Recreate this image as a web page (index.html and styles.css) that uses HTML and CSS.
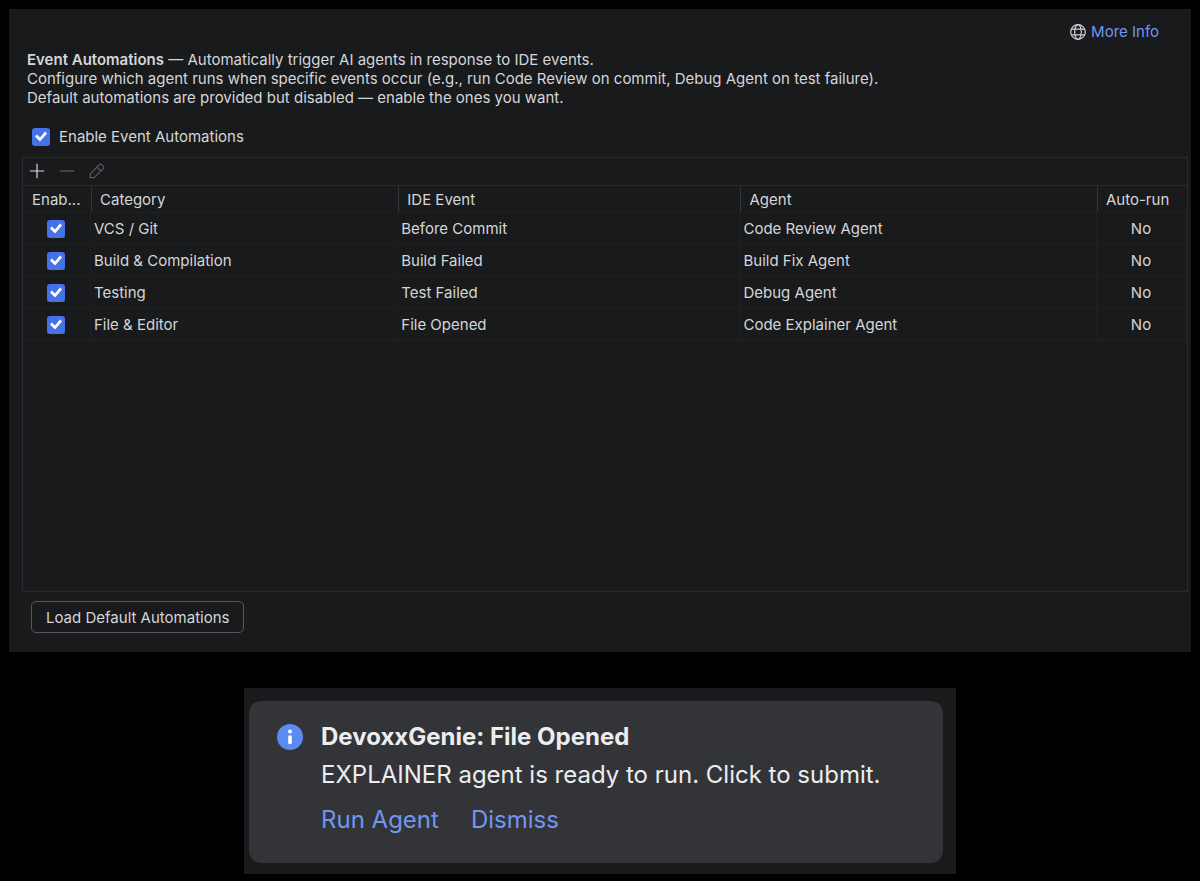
FILE: index.html
```html
<!DOCTYPE html>
<html lang="en">
<head>
    <meta charset="UTF-8">
    <meta name="viewport" content="width=device-width, initial-scale=1.0">
    <title>Event Automations</title>
    <link rel="stylesheet" href="styles.css">
</head>
<body>
    <main class="settings">
        <div class="help">
            <svg class="globe" viewBox="0 0 16 16" fill="none" stroke="currentColor" stroke-width="1.2" aria-hidden="true">
                <circle cx="8" cy="8" r="7.3"/>
                <ellipse cx="8" cy="8" rx="3.3" ry="7.3"/>
                <path d="M1.4 5.2h13.2M1.4 10.8h13.2"/>
            </svg>
            <a href="#">More Info</a>
        </div>

        <p class="intro">
            <b>Event Automations</b> — Automatically trigger AI agents in response to IDE events.<br>
            Configure which agent runs when specific events occur (e.g., run Code Review on commit, Debug Agent on test failure).<br>
            Default automations are provided but disabled — enable the ones you want.
        </p>

        <label class="enable">
            <input type="checkbox" class="check" checked>
            Enable Event Automations
        </label>

        <section class="automations">
            <div class="toolbar">
                <button type="button" aria-label="Add">
                    <svg viewBox="0 0 16 16" fill="none" stroke="currentColor" stroke-width="1.2"><path d="M8 .8v14.4M.8 8h14.4"/></svg>
                </button>
                <button type="button" aria-label="Remove" disabled>
                    <svg viewBox="0 0 16 16" fill="none" stroke="currentColor" stroke-width="1.2"><path d="M.8 8h14.4"/></svg>
                </button>
                <button type="button" aria-label="Edit" disabled>
                    <svg viewBox="0 0 16 16" fill="none" stroke="currentColor" stroke-width="1.2" stroke-linejoin="round"><path d="M1.3 14.7v-3.9L10.4 1.7a1.6 1.6 0 0 1 2.3 0l1.6 1.6a1.6 1.6 0 0 1 0 2.3L5.2 14.7zM8 4.1l3.9 3.9"/></svg>
                </button>
            </div>

            <table>
                <colgroup>
                    <col class="col-enabled">
                    <col class="col-category">
                    <col class="col-event">
                    <col class="col-agent">
                    <col class="col-auto">
                </colgroup>
                <thead>
                    <tr>
                        <th><span>Enab...</span></th>
                        <th><span>Category</span></th>
                        <th><span>IDE Event</span></th>
                        <th><span>Agent</span></th>
                        <th><span>Auto-run</span></th>
                    </tr>
                </thead>
                <tbody>
                    <tr>
                        <td><input type="checkbox" class="check" aria-label="Enable Before Commit" checked></td>
                        <td>VCS / Git</td>
                        <td>Before Commit</td>
                        <td>Code Review Agent</td>
                        <td>No</td>
                    </tr>
                    <tr>
                        <td><input type="checkbox" class="check" aria-label="Enable Build Failed" checked></td>
                        <td>Build &amp; Compilation</td>
                        <td>Build Failed</td>
                        <td>Build Fix Agent</td>
                        <td>No</td>
                    </tr>
                    <tr>
                        <td><input type="checkbox" class="check" aria-label="Enable Test Failed" checked></td>
                        <td>Testing</td>
                        <td>Test Failed</td>
                        <td>Debug Agent</td>
                        <td>No</td>
                    </tr>
                    <tr>
                        <td><input type="checkbox" class="check" aria-label="Enable File Opened" checked></td>
                        <td>File &amp; Editor</td>
                        <td>File Opened</td>
                        <td>Code Explainer Agent</td>
                        <td>No</td>
                    </tr>
                </tbody>
            </table>
        </section>

        <button type="button" class="load">Load Default Automations</button>
    </main>

    <aside class="toast-area">
        <div class="toast" role="status">
            <svg class="info" viewBox="0 0 26 26" aria-hidden="true">
                <circle cx="13" cy="13" r="13" fill="#5a8af2"/>
                <circle cx="13" cy="7.6" r="2" fill="#fff"/>
                <rect x="11.2" y="11.2" width="3.6" height="9" rx="1.6" fill="#fff"/>
            </svg>
            <div>
                <h2>DevoxxGenie: File Opened</h2>
                <p>EXPLAINER agent is ready to run. Click to submit.</p>
                <div class="actions">
                    <a href="#">Run Agent</a>
                    <a href="#">Dismiss</a>
                </div>
            </div>
        </div>
    </aside>
</body>
</html>
```

FILE: styles.css
```css
* {
    box-sizing: border-box;
}
body {
    margin: 0;
    padding: 9px;
    background: #000;
    color: #d4d6da;
    font-family: Inter, "Liberation Sans", sans-serif;
    font-size: 15px;
    line-height: 19px;
}
a {
    color: #7196f0;
    text-decoration: none;
}
button {
    font: inherit;
    color: inherit;
    background: none;
    border: none;
}
.settings {
    background: #191a1c;
    padding: 13px 3px 19px 13px;
}
.help {
    display: flex;
    justify-content: flex-end;
    align-items: center;
    gap: 5px;
    padding-right: 29px;
}
.globe {
    width: 16px;
    height: 16px;
    color: #ced0d6;
}
.intro {
    margin: 9px 0 20px;
    padding-left: 5px;
}
.intro b {
    font-weight: 600;
}
.enable {
    display: flex;
    align-items: center;
    gap: 9px;
    padding-left: 10px;
}
.check {
    appearance: none;
    display: block;
    flex: none;
    width: 18px;
    height: 18px;
    margin: 0;
    border-radius: 3px;
    background: #4472e8;
}
.check:checked::before {
    content: "";
    display: block;
    width: 18px;
    height: 18px;
    background: #fff;
    clip-path: polygon(3px 9px, 5px 7px, 8px 10px, 13px 4px, 15px 6px, 8px 14px);
}
.automations {
    min-height: 435px;
    margin-top: 11px;
    border: 1px solid #292a2d;
}
.toolbar {
    display: flex;
    gap: 14px;
    padding: 5px 6px 6px;
    border-bottom: 1px solid #292a2d;
}
.toolbar button {
    width: 16px;
    height: 16px;
    padding: 0;
}
.toolbar button:disabled {
    color: #5a5c61;
}
.toolbar svg {
    display: block;
}

table {
    width: 100%;
    table-layout: fixed;
    border-collapse: separate;
    border-spacing: 0;
}
.col-enabled {
    width: 68px;
}
.col-category {
    width: 26.4%;
}
.col-event {
    width: 29.4%;
}
.col-auto {
    width: 90px;
}
th {
    padding: 1px 0 0;
    border-bottom: 1px solid #1f2022;
    font-weight: 400;
    text-align: left;
}
th span {
    display: block;
    padding: 3px 8px;
    border-left: 1px solid #35373b;
}
th:first-child span {
    border-left-color: transparent;
}
td {
    height: 32px;
    padding: 0 4px 0 3px;
    border-right: 1px solid #1f2022;
    border-bottom: 1px solid #1f2022;
}
td:first-child .check {
    margin: 0 auto;
}
td:last-child {
    text-align: center;
}
.load {
    display: block;
    height: 32px;
    margin: 9px 0 0 9px;
    padding: 0 14px;
    border: 1px solid #55575c;
    border-radius: 5px;
}

.toast-area {
    max-width: 712px;
    margin: 36px auto 0;
    padding: 13px 13px 11px 5px;
    background: #191a1c;
}
.toast {
    display: flex;
    gap: 18px;
    padding: 17px 28px 24px;
    border-radius: 12px;
    background: #333437;
    color: #ecedf0;
    font-size: 24px;
    line-height: 38px;
}
.info {
    flex: none;
    width: 26px;
    height: 26px;
    margin-top: 6px;
}
.toast h2 {
    margin: 0;
    font-size: 24px;
    font-weight: 700;
}
.toast p {
    margin: 0;
}
.actions {
    display: flex;
    gap: 32px;
    margin-top: 7px;
}
```
